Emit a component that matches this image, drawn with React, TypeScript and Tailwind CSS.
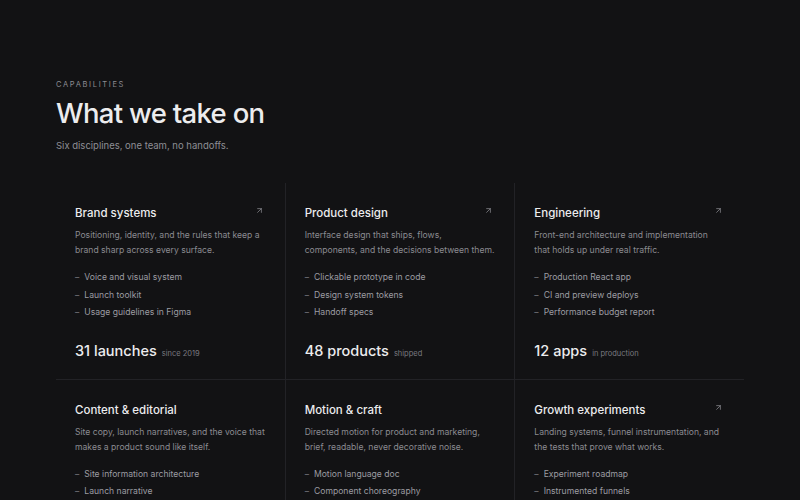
import { ArrowUpRight } from "lucide-react";

type Capability = {
  title: string;
  blurb: string;
  items: string[];
  stat: string;
  statNote: string;
  linked: boolean;
};

const capabilities: Capability[] = [
  {
    title: "Brand systems",
    blurb: "Positioning, identity, and the rules that keep a brand sharp across every surface.",
    items: ["Voice and visual system", "Launch toolkit", "Usage guidelines in Figma"],
    stat: "31 launches",
    statNote: "since 2019",
    linked: true,
  },
  {
    title: "Product design",
    blurb: "Interface design that ships, flows, components, and the decisions between them.",
    items: ["Clickable prototype in code", "Design system tokens", "Handoff specs"],
    stat: "48 products",
    statNote: "shipped",
    linked: true,
  },
  {
    title: "Engineering",
    blurb: "Front-end architecture and implementation that holds up under real traffic.",
    items: ["Production React app", "CI and preview deploys", "Performance budget report"],
    stat: "12 apps",
    statNote: "in production",
    linked: true,
  },
  {
    title: "Content & editorial",
    blurb: "Site copy, launch narratives, and the voice that makes a product sound like itself.",
    items: ["Site information architecture", "Launch narrative", "Editorial calendar"],
    stat: "200+ pages",
    statNote: "written",
    linked: false,
  },
  {
    title: "Motion & craft",
    blurb: "Directed motion for product and marketing, brief, readable, never decorative noise.",
    items: ["Motion language doc", "Component choreography", "Launch film cutdowns"],
    stat: "60 pieces",
    statNote: "animated",
    linked: false,
  },
  {
    title: "Growth experiments",
    blurb: "Landing systems, funnel instrumentation, and the tests that prove what works.",
    items: ["Experiment roadmap", "Instrumented funnels", "Weekly readouts"],
    stat: "120 tests",
    statNote: "run",
    linked: true,
  },
];

function CapabilityCard({ cap }: { cap: Capability }) {
  return (
    <div className="flex flex-col bg-[#121214] pb-[18px] pl-[19px] pr-[21px] pt-[22px]">
      <div className="flex items-start justify-between">
        <h3 className="text-[11.5px] font-medium leading-4 text-[#ececee]">{cap.title}</h3>
        {cap.linked && <ArrowUpRight className="mt-[1px] h-[9px] w-[9px] text-[#8a8a90]" strokeWidth={2} />}
      </div>
      <p className="mr-[-2px] mt-[7px] text-[8.6px] leading-[15px] text-[#8b8b91]">{cap.blurb}</p>
      <ul className="mt-[11px] text-[8.6px] leading-[17.5px] text-[#9c9ca2]">
        {cap.items.map((item) => (
          <li key={item} className="flex gap-[5px]">
            <span className="text-[#7a7a80]">–</span>
            <span>{item}</span>
          </li>
        ))}
      </ul>
      <div className="mt-[19px] flex items-baseline gap-[5px]">
        <span className="text-[14.5px] font-medium leading-5 text-[#ececee]">{cap.stat}</span>
        <span className="text-[7.5px] text-[#7a7a80]">{cap.statNote}</span>
      </div>
    </div>
  );
}

export default function App() {
  return (
    <div className="min-h-[500px] bg-[#121214] px-[56px] pt-[80px] font-['Inter',sans-serif] antialiased">
      <p className="text-[7.5px] uppercase leading-[10px] tracking-[0.22em] text-[#8c8c92]">Capabilities</p>
      <h2 className="mt-[6px] text-[27.5px] font-medium leading-[34px] tracking-tight text-[#ececee]">What we take on</h2>
      <p className="mt-[9px] text-[9.5px] leading-[14px] text-[#8e8e94]">Six disciplines, one team, no handoffs.</p>
      <div className="mt-[30px] grid grid-cols-3 gap-px bg-[#222226]">
        {capabilities.map((cap) => (
          <CapabilityCard key={cap.title} cap={cap} />
        ))}
      </div>
    </div>
  );
}
